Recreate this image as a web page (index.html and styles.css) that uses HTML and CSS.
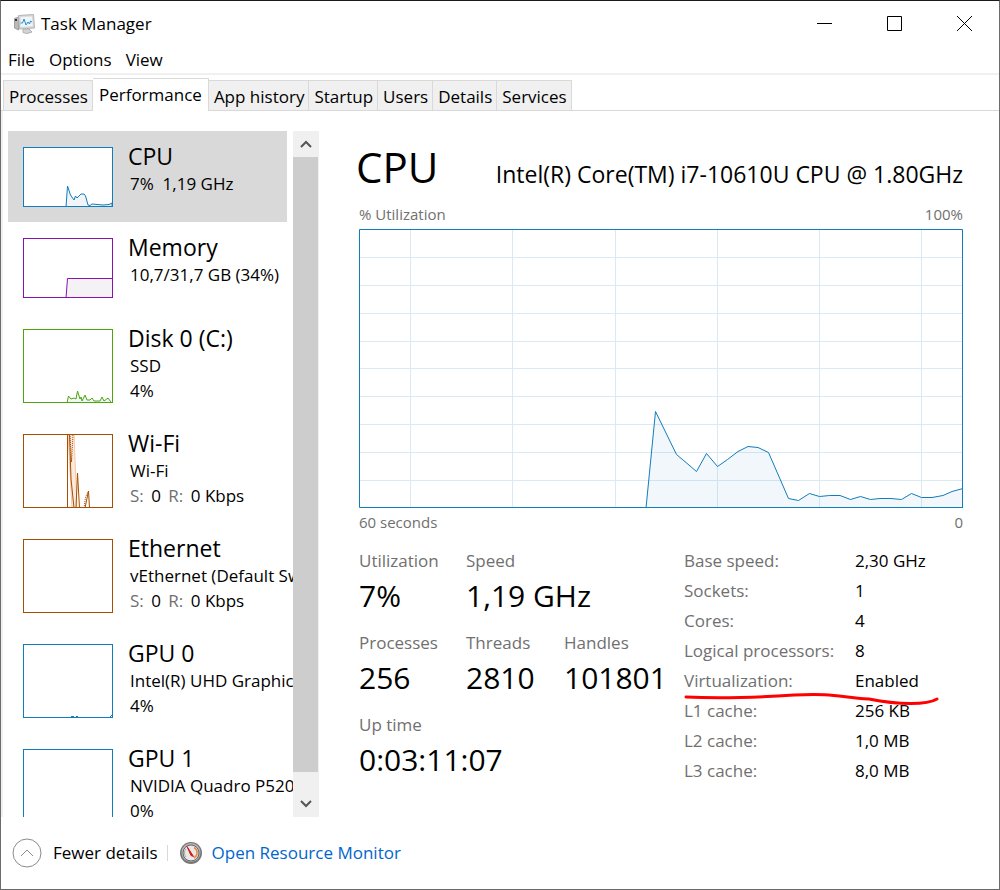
FILE: index.html
```html
<!DOCTYPE html>
<html lang="en">
  <head>
    <meta charset="utf-8">
    <title>Task Manager</title>
    <link rel="stylesheet" href="styles.css">
  </head>
  <body>
    <div class="window">
      <header class="titlebar">
        <svg class="app-icon" width="22" height="20" viewBox="0 0 22 20">
          <path d="M0.500 4.500l4-1.500v13l-4-2z" fill="#b9b9b9" stroke="#a0a0a0"/>
          <rect x="1" y="5" width="2" height="2" fill="#333"/>
          <path d="M9 15h6l3 3-5 1.500-4-1z" fill="#d4d4d4" stroke="#b0b0b0"/>
          <path d="M4.500 1.500l15-1 1 13.500-15 1z" fill="#d8d8d8" stroke="#b5b5b5"/>
          <path d="M6.500 3l11.500-.5.800 9.500-12 1z" fill="#eef5fb"/>
          <path d="M6.500 9h2l1.500-4 2 6 2-3 1.500 2 1-3 1.500 1" fill="none" stroke="#2a8fca"/>
        </svg>
        <h1>Task Manager</h1>
        <div class="window-buttons">
          <button aria-label="Minimize"><svg width="15" height="15"><path d="M0 7.500h15"/></svg></button>
          <button aria-label="Maximize"><svg width="15" height="15"><path d="M.5.5h14v14h-14z"/></svg></button>
          <button aria-label="Close"><svg width="15" height="15"><path d="M0 0l15 15M15 0L0 15"/></svg></button>
        </div>
      </header>

      <nav class="menu">
        <button>File</button>
        <button>Options</button>
        <button>View</button>
      </nav>

      <div class="tabs" role="tablist">
        <button class="tab" role="tab">Processes</button>
        <button class="tab active" role="tab" aria-selected="true">Performance</button>
        <button class="tab" role="tab">App history</button>
        <button class="tab" role="tab">Startup</button>
        <button class="tab" role="tab">Users</button>
        <button class="tab" role="tab">Details</button>
        <button class="tab" role="tab">Services</button>
      </div>

      <div class="content">
        <aside class="sidebar">
          <div class="devices">
            <button class="device selected">
              <svg class="thumb short blue" viewBox="0 0 90 60">
                <path class="area" d="M43 60L44.500 39 47.500 48 51 53 52.500 49 54 51 58 47 61 47 62.500 49 65 58 67 58.500 69 57 80 58 86 57.500 89 56V60z"/>
                <rect class="frame" x="0.500" y="0.500" width="89" height="59"/>
              </svg>
              <span class="info">
                <span class="name">CPU</span>
                <span class="line">7%&nbsp; 1,19 GHz</span>
              </span>
            </button>
            <button class="device">
              <svg class="thumb short purple" viewBox="0 0 90 60">
                <path class="area" d="M43 60L44.500 40.500H90V60z"/>
                <rect class="frame" x="0.500" y="0.500" width="89" height="59"/>
              </svg>
              <span class="info">
                <span class="name">Memory</span>
                <span class="line">10,7/31,7 GB (34%)</span>
              </span>
            </button>
            <button class="device">
              <svg class="thumb green" viewBox="0 0 90 74">
                <path class="area" d="M44 74L45.500 67 48 70 51 69 53 70 54.500 62 57 70 58 68 59 72 62 66 64 71 67 71 69 69 71 72 77 72 79 68 81 72 85 69 88 73V74z"/>
                <rect class="frame" x="0.500" y="0.500" width="89" height="73"/>
              </svg>
              <span class="info">
                <span class="name">Disk 0 (C:)</span>
                <span class="line">SSD</span>
                <span class="line">4%</span>
              </span>
            </button>
            <button class="device">
              <svg class="thumb orange" viewBox="0 0 90 74">
                <path class="faint" d="M45 0h6l3 74h-5z"/>
                <path d="M44.500 0V74M46.500 0L48 45 51 74M53 74L54.500 39 56.500 74M62 74L65.500 57 66.500 74"/>
                <path class="dotted" d="M47 2L48.500 28 50 0M61 74L62.500 63 65 58"/>
                <rect class="frame" x="0.500" y="0.500" width="89" height="73"/>
              </svg>
              <span class="info">
                <span class="name">Wi-Fi</span>
                <span class="line">Wi-Fi</span>
                <span class="line rates"><i>S:</i> 0 <i>R:</i> 0 Kbps</span>
              </span>
            </button>
            <button class="device">
              <svg class="thumb orange" viewBox="0 0 90 74">
                <rect class="frame" x="0.500" y="0.500" width="89" height="73"/>
              </svg>
              <span class="info">
                <span class="name">Ethernet</span>
                <span class="line">vEthernet (Default Switch)</span>
                <span class="line rates"><i>S:</i> 0 <i>R:</i> 0 Kbps</span>
              </span>
            </button>
            <button class="device">
              <svg class="thumb blue" viewBox="0 0 90 74">
                <path d="M48 72.500h3M53 72.500h2M87 73l2-2"/>
                <rect class="frame" x="0.500" y="0.500" width="89" height="73"/>
              </svg>
              <span class="info">
                <span class="name">GPU 0</span>
                <span class="line">Intel(R) UHD Graphics</span>
                <span class="line">4%</span>
              </span>
            </button>
            <button class="device">
              <svg class="thumb blue" viewBox="0 0 90 74">
                <rect class="frame" x="0.500" y="0.500" width="89" height="73"/>
              </svg>
              <span class="info">
                <span class="name">GPU 1</span>
                <span class="line">NVIDIA Quadro P520</span>
                <span class="line">0%</span>
              </span>
            </button>
          </div>
          <div class="scrollbar">
            <button aria-label="Scroll up"><svg width="12" height="10"><path d="M1 8l5-5 5 5"/></svg></button>
            <div class="track"><div class="handle"></div></div>
            <button aria-label="Scroll down"><svg width="12" height="10"><path d="M1 2l5 5 5-5"/></svg></button>
          </div>
        </aside>

        <main class="details">
          <div class="heading">
            <h2>CPU</h2>
            <p>Intel(R) Core(TM) i7-10610U CPU @ 1.80GHz</p>
          </div>

          <div class="caption top"><span>% Utilization</span><span>100%</span></div>
          <svg class="chart" viewBox="0 0 604 279" preserveAspectRatio="none">
            <path class="grid" d="M51.500 0V279M153.500 0V279M256.500 0V279M358.500 0V279M460.500 0V279M562.500 0V279"/>
            <path class="grid" d="M0 28.500H604M0 56.500H604M0 84.500H604M0 112.500H604M0 139.500H604M0 167.500H604M0 195.500H604M0 223.500H604M0 251.500H604"/>
            <path class="area" d="M287 279L296.500 182.500 317.500 225.500 327 233.500 337.500 242.500 347.500 224.500 358.500 237.500 368.500 230.500 379 222.500 389 217.500 399 218.500 409.500 223.500 429.500 269.500 439.500 271.500 450.500 264.500 460.500 267.500 470.500 266.500 481 266.500 491.500 270.500 501.500 267.500 511.500 270.500 521 269.500 532 269.500 542.500 270.500 552.500 264.500 562.500 268.500 573 268.500 584 266.500 593 262.500 604 259.500V279z"/>
            <path class="frame" d="M.5.5h603v278H.5z"/>
          </svg>
          <div class="caption"><span>60 seconds</span><span>0</span></div>

          <div class="numbers">
            <dl class="stats">
              <div><dt>Utilization</dt><dd>7%</dd></div>
              <div class="wide"><dt>Speed</dt><dd>1,19 GHz</dd></div>
              <div><dt>Processes</dt><dd>256</dd></div>
              <div><dt>Threads</dt><dd>2810</dd></div>
              <div><dt>Handles</dt><dd>101801</dd></div>
              <div class="full"><dt>Up time</dt><dd>0:03:11:07</dd></div>
            </dl>
            <table class="specs">
              <tr><th>Base speed:</th><td>2,30 GHz</td></tr>
              <tr><th>Sockets:</th><td>1</td></tr>
              <tr><th>Cores:</th><td>4</td></tr>
              <tr><th>Logical processors:</th><td>8</td></tr>
              <tr class="marked">
                <th>Virtualization:
                  <svg class="marker" width="256" height="16" viewBox="0 0 256 16"><path d="M2 6C40 8 80 6 110 4 150 2 155 6 185 8 215 14 243 14 253 8"/></svg>
                </th>
                <td>Enabled</td>
              </tr>
              <tr><th>L1 cache:</th><td>256 KB</td></tr>
              <tr><th>L2 cache:</th><td>1,0 MB</td></tr>
              <tr><th>L3 cache:</th><td>8,0 MB</td></tr>
            </table>
          </div>
        </main>
      </div>

      <footer class="footer">
        <button class="fewer">
          <svg width="30" height="30" viewBox="0 0 30 30"><circle cx="15" cy="15" r="14"/><path d="M9 18l6-6 6 6"/></svg>
          Fewer details
        </button>
        <a class="monitor" href="#">
          <svg width="24" height="24" viewBox="0 0 24 24">
            <circle cx="12" cy="12" r="11" fill="#777"/>
            <circle cx="12" cy="11.500" r="9.500" fill="#b5b5b5"/>
            <circle cx="12" cy="12" r="8" fill="#e9e9e9" stroke="#666"/>
            <path d="M15 6.500a6 6 0 0 1 0 10.500" fill="none" stroke="#e8894a" stroke-width="1.500"/>
            <path d="M7 16a6 6 0 0 1 0-8" fill="none" stroke="#aaa"/>
            <path d="M8 5.500l6.500 10-2.500-1z" fill="#d8180c" stroke="#d8180c"/>
          </svg>
          <span>Open Resource Monitor</span>
        </a>
      </footer>
    </div>
  </body>
</html>
```

FILE: styles.css
```css
* {
  box-sizing: border-box;
}
body {
  margin: 0;
  font-family: "Open Sans", "Noto Sans", sans-serif;
  font-size: 17px;
  line-height: 24px;
  color: #000;
}
button {
  margin: 0;
  padding: 0;
  border: 0;
  background: none;
  font: inherit;
  color: inherit;
  text-align: left;
}
svg {
  display: block;
  flex: none;
}
.window {
  display: flex;
  flex-direction: column;
  height: 100vh;
  border: 1px solid #6b6b6b;
  border-top-color: #1a1a1a;
  background: #fff;
}

/* Title bar */
.titlebar {
  display: flex;
  align-items: center;
  height: 45px;
  padding-left: 13px;
}
.titlebar h1 {
  margin: 0 0 0 5px;
  font-size: 17px;
  font-weight: normal;
}
.window-buttons {
  display: flex;
  margin-left: auto;
}
.window-buttons button {
  display: flex;
  align-items: center;
  justify-content: center;
  width: 70px;
  height: 44px;
}
.window-buttons svg {
  fill: none;
  stroke: #000;
}

/* Menu */
.menu {
  display: flex;
  gap: 14px;
  height: 29px;
  padding: 2px 7px;
  border-bottom: 2px solid #f0f0f0;
}

/* Tabs */
.tabs {
  display: flex;
  align-items: flex-end;
  height: 36px;
  padding-left: 2px;
  box-shadow: inset 0 -1px #d9d9d9;
}
.tab {
  height: 31px;
  padding: 2px 4px 0 5px;
  border: 1px solid #d9d9d9;
  border-left-width: 0;
  background: #f0f0f0;
}
.tab:first-child {
  border-left-width: 1px;
}
.tab.active {
  height: 33px;
  padding: 0 6px;
  border-bottom: 0;
  background: #fff;
}

/* Device list */
.content {
  display: flex;
  flex: 1;
  min-height: 0;
}
.sidebar {
  display: flex;
  flex: none;
  width: 318px;
  padding-top: 20px;
  padding-left: 5px;
  border-left: 2px solid #f0f0f0;
}
.devices {
  flex: 1;
  overflow: hidden;
}
.device {
  display: flex;
  gap: 15px;
  width: 279px;
  padding: 16px 15px 15px;
  white-space: nowrap;
}
.device.selected {
  background: #d9d9d9;
}
.thumb {
  width: 90px;
  height: 74px;
  background: #fff;
  fill: none;
  stroke: currentColor;
}
.thumb.short {
  height: 60px;
}
.thumb .area {
  fill: #f1f5fa;
}
.thumb.purple .area {
  fill: #f4f2f4;
}
.thumb .faint {
  fill: #fbe9dc;
  stroke: #f3c9ac;
}
.thumb .dotted {
  stroke-dasharray: 1 1;
}
.blue {
  color: #117dbb;
}
.purple {
  color: #8b12ae;
}
.green {
  color: #4da60c;
}
.orange {
  color: #a74f01;
}
.info {
  display: flex;
  flex-direction: column;
  height: 60px;
  margin-top: -5px;
}
.name {
  font-size: 23px;
  line-height: 29px;
}
.line {
  padding-left: 2px;
  line-height: 25px;
}
.line i {
  margin-right: 3px;
  font-style: normal;
  color: #707070;
}
.line i + i {
  margin-left: 3px;
}

/* Scroll bar */
.scrollbar {
  display: flex;
  flex-direction: column;
  width: 26px;
  padding-right: 1px;
  background: #f0f0f0;
}
.scrollbar button {
  display: flex;
  align-items: center;
  justify-content: center;
  height: 26px;
}
.scrollbar path {
  fill: none;
  stroke: #555;
  stroke-width: 2;
}
.track {
  flex: 1;
}
.handle {
  height: 97%;
  background: #cdcdcd;
}

/* Details */
.details {
  flex: 1;
  min-width: 0;
  padding: 26px 36px 0 40px;
}
.heading {
  display: flex;
  align-items: baseline;
  justify-content: space-between;
  height: 65px;
  margin-left: -3px;
}
.heading h2 {
  margin: 0;
  font-size: 42px;
  font-weight: normal;
  line-height: 60px;
}
.heading p {
  margin: 0;
  font-size: 23px;
}
.caption {
  display: flex;
  justify-content: space-between;
  padding-top: 2px;
  font-size: 15px;
  color: #707070;
}
.caption.top {
  padding: 0 0 3px;
}
.chart {
  width: 100%;
  height: 279px;
}
.chart path {
  fill: none;
  stroke: #117dbb;
  vector-effect: non-scaling-stroke;
}
.chart .grid {
  stroke: #d9eaf4;
}
.chart .area {
  fill: rgba(17, 125, 187, 0.06);
}
.numbers {
  display: flex;
  justify-content: space-between;
  margin-top: 15px;
}
.stats {
  display: grid;
  grid-template-columns: 107px 98px auto;
  align-content: start;
  row-gap: 12px;
  margin: 0;
}
.stats .wide {
  grid-column: span 2;
}
.stats .full {
  grid-column: span 3;
}
dt, .specs th {
  color: #707070;
}
dd {
  margin: 0;
  font-size: 30px;
  line-height: 46px;
}
.specs {
  width: 279px;
  margin-top: -3px;
  border-collapse: collapse;
}
.specs th, .specs td {
  height: 30px;
  padding: 0;
  font-weight: normal;
  text-align: left;
  white-space: nowrap;
}
.specs th {
  width: 171px;
}
.marked th {
  position: relative;
}
.marker {
  position: absolute;
  top: 25px;
  left: 0;
  fill: none;
  stroke: #f00;
  stroke-width: 3;
  stroke-linecap: round;
}

/* Footer */
.footer {
  display: flex;
  align-items: center;
  height: 72px;
  padding: 0 11px;
}
.fewer {
  display: flex;
  align-items: center;
  gap: 11px;
}
.fewer svg {
  fill: none;
  stroke: #8a8a8a;
}
.monitor {
  display: flex;
  align-items: center;
  gap: 9px;
  margin-left: 9px;
  color: #0066cc;
  text-decoration: none;
}
.monitor::before {
  content: "";
  height: 16px;
  margin-right: 2px;
  border-left: 1px solid #d9d9d9;
}
```
